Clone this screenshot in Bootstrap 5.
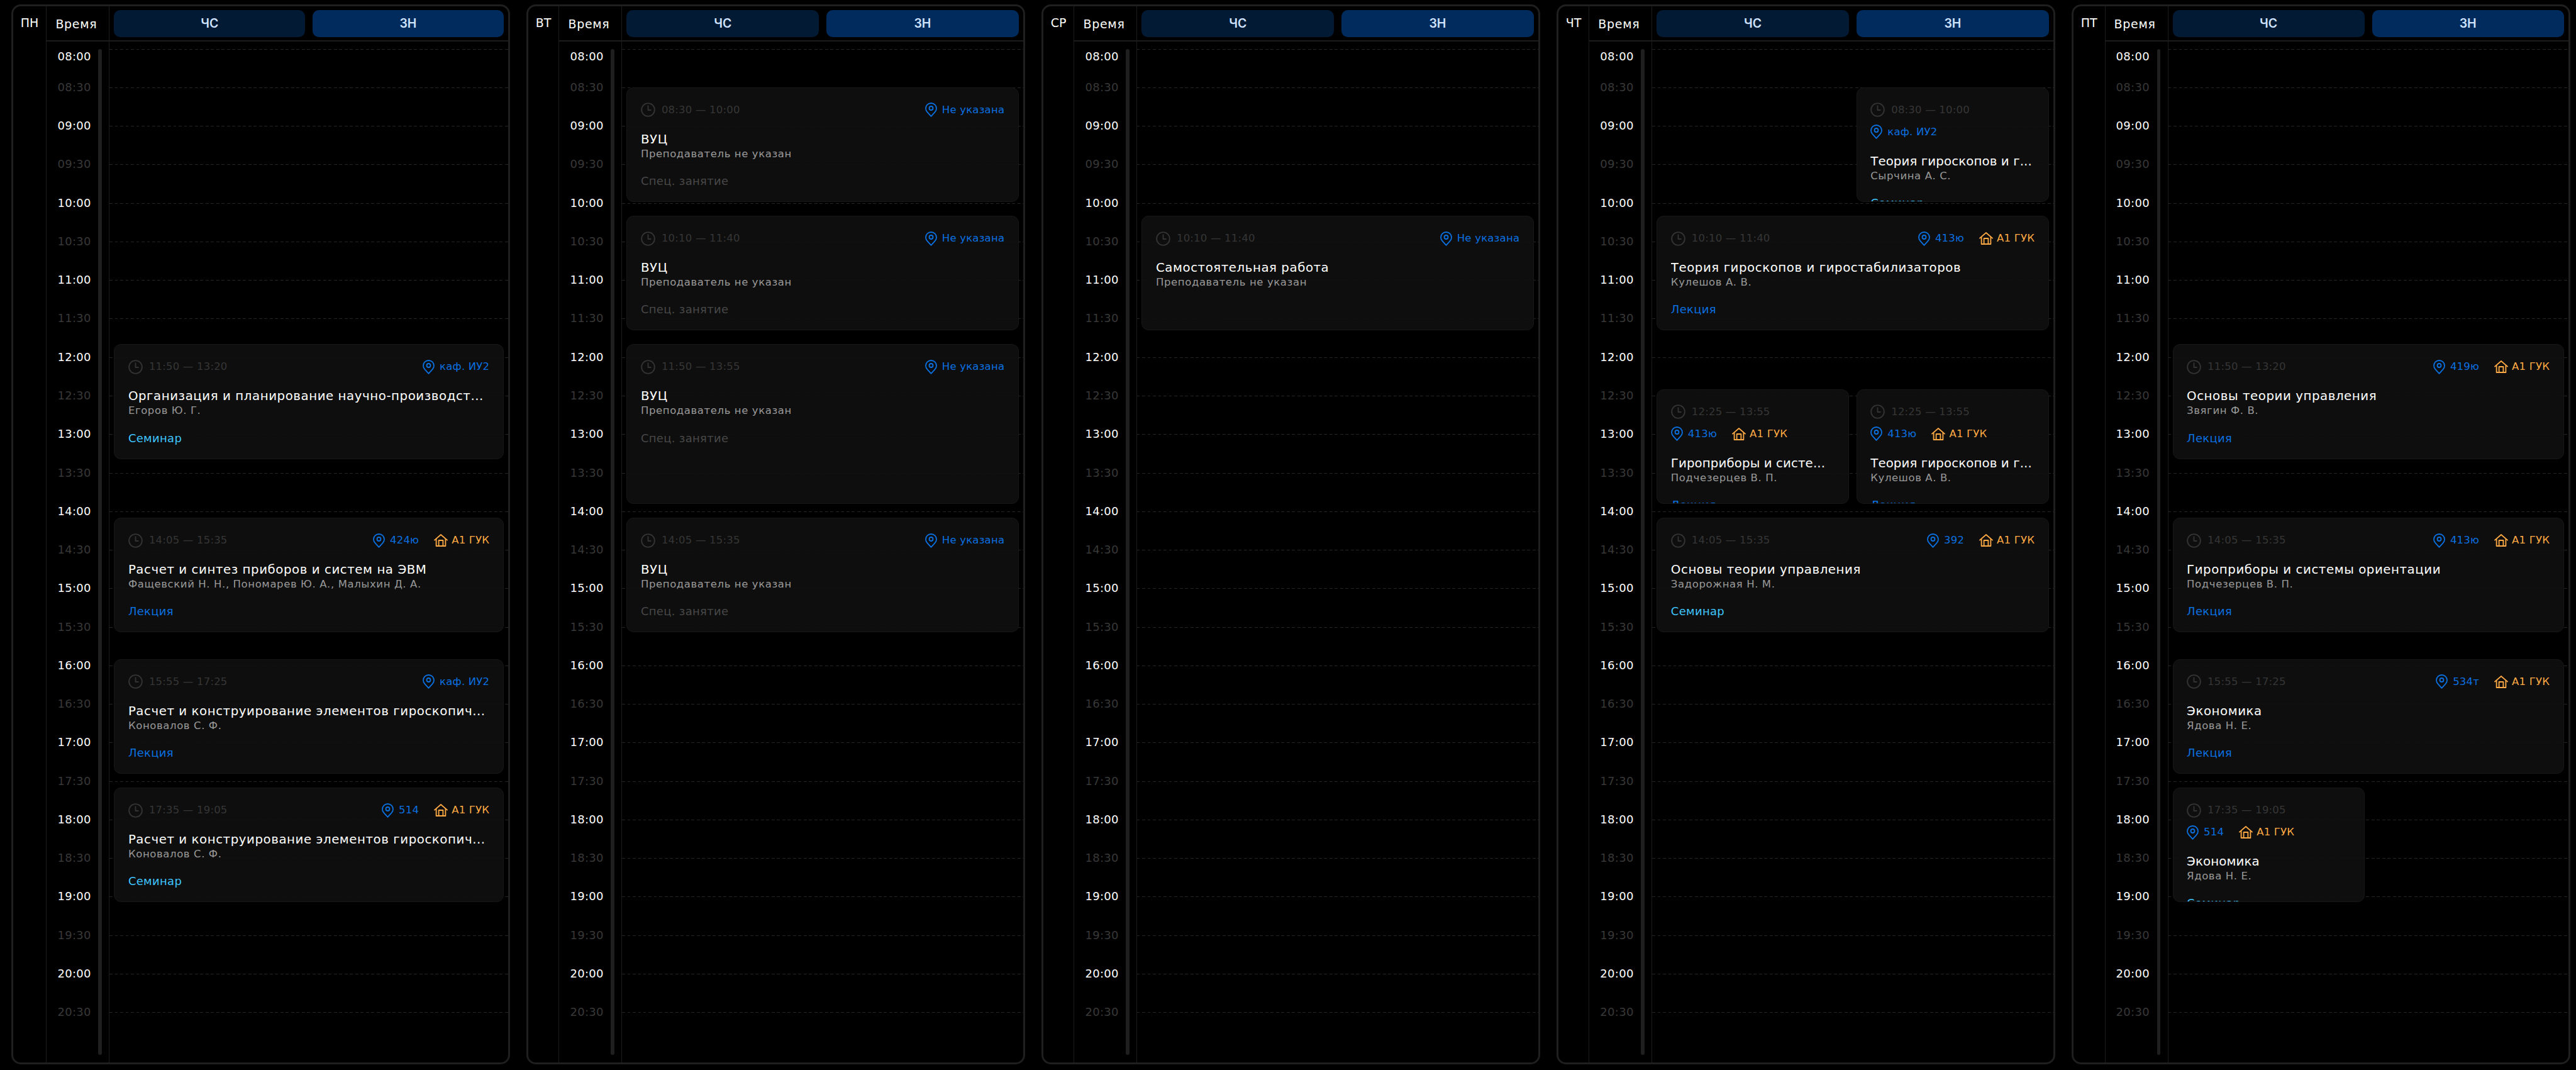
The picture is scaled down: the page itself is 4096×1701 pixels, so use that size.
<!doctype html>
<html lang="ru">
<head>
<meta charset="utf-8">
<title>Расписание</title>
<link href="https://cdn.jsdelivr.net/npm/bootstrap@5.3.0/dist/css/bootstrap.min.css" rel="stylesheet">
<style>
html,body{height:100%;background:#000}
body{font-family:"DejaVu Sans","Noto Sans",sans-serif;color:#fff;padding:7px 9.4px 9px 17.8px;overflow:hidden}
.week{height:100%;gap:26px}
.daycol{flex:1 1 0;min-width:0;border:3px solid #1f1f1f;border-radius:15px;overflow:hidden}
.dayname{padding:15px 12px 0;border-right:1px solid #1c1c1c;font-size:19px;line-height:22px;flex:none}
.headrow{height:56px;border-bottom:2px solid #1c1c1c;flex:none}
.timehead{width:100px;flex:none;border-right:1px solid #1c1c1c;font-size:19px;padding:17px 0 0 14px;line-height:22px;letter-spacing:.7px;white-space:nowrap}
.modes{gap:12px;padding:6px 7px 0;align-items:flex-start}
.modebtn{flex:1 1 0;height:43px;border-radius:10px;border:0;font-family:Inter,sans-serif;font-size:19.5px;font-weight:600;color:#cfe2ff;display:flex;align-items:center;justify-content:center}
.mode-ch{background:#021a33}
.mode-zn{background:#002b5c}
.bodyrow{min-height:0}
.timecol{width:100px;flex:none;border-right:1px solid #1c1c1c;padding:11.6px 0 12px 0}
.ticks{width:82px;padding-left:5.4px;text-align:center;flex:none}
.tick{height:61.28px;line-height:0;font-size:18px;letter-spacing:.3px;color:#383838}
.tick-hour{color:#fff}
.tick-first{padding-top:12px}
.tbar{width:5.7px;background:#1f1f1f;border-radius:3px;flex:none}
.grid-area{min-width:0;padding-top:11.6px;position:relative}
.gline{height:61.28px;background-image:repeating-linear-gradient(90deg,#242424 0 4.5px,transparent 4.5px 8.5px);background-size:100% 1px;background-repeat:no-repeat}
.lesson{position:absolute;background:rgba(16,16,16,.9);border:1px solid #171717;border-radius:11px;overflow:hidden;padding:23px 21.5px 0}
.l-wide{left:7px;right:7px}
.l-half1{left:7px;width:calc(50% - 12.7px)}
.l-half2{right:7px;width:calc(50% - 12.7px)}
.tm{font-size:16.5px;line-height:24px;color:#363636;gap:10px;white-space:nowrap;letter-spacing:.2px}
.tm svg{flex:none}
.rooms{gap:24px;font-size:16.5px;line-height:24px;white-space:nowrap;letter-spacing:.2px}
.rooms-below{margin-top:11px}
.rm{color:#0b70e0;gap:8px}
.bld{color:#ffaa44;gap:6px}
.ttl{font-size:19.8px;line-height:24px;margin-top:22.7px;white-space:nowrap;overflow:hidden;text-overflow:ellipsis;letter-spacing:.55px}
.l-half1 .ttl,.l-half2 .ttl{letter-spacing:.1px}
.tch{font-size:16.5px;line-height:22px;color:#999;white-space:nowrap;letter-spacing:.6px}
.ltype{font-size:18px;line-height:22px;margin-top:21.5px;white-space:nowrap;letter-spacing:.3px}
.t-sem{color:#3fc6ff}
.t-lec{color:#0b70e0}
.t-spec{color:#484848}
</style>
</head>
<body>
<div class="week d-flex" id="week"></div>
<script>
var CLOCK='<svg width="23" height="23" viewBox="0 0 24 24" fill="none" stroke="#333" stroke-width="2"><circle cx="12" cy="12" r="10.8"/><path d="M12 5.5V12.5H16.5" stroke-linecap="round" stroke-linejoin="round"/></svg>';
var PIN='<svg width="19" height="23" viewBox="0 0 19 23" fill="none" stroke="#0b70e0" stroke-width="1.8" stroke-linejoin="round"><path d="M9.5 21.8 3.6 15.4C1.9 13.6 1 11.4 1 9.4 1 4.7 4.8 1 9.5 1S18 4.7 18 9.4C18 11.4 17.1 13.6 15.4 15.4Z"/><circle cx="9.5" cy="9" r="3"/></svg>';
var HOUSE='<svg width="22" height="20" viewBox="0 0 22 20" fill="none" stroke="#ffaa44" stroke-width="1.8" stroke-linecap="round" stroke-linejoin="round"><path d="M1 9.6 11 1 21 9.6"/><path d="M3.6 7.8V19H18.4V7.8"/><path d="M7.6 19V10H14.4V19"/></svg>';
var SEM=['Семинар','t-sem'],LEC=['Лекция','t-lec'],SPEC=['Спец. занятие','t-spec'];
var NT='Преподаватель не указан';
var days=[
 ['ПН',[
  ['11:50','13:20','w','каф. ИУ2',0,'Организация и планирование научно-производст...','Егоров Ю. Г.',SEM],
  ['14:05','15:35','w','424ю',1,'Расчет и синтез приборов и систем на ЭВМ','Фащевский Н. Н., Пономарев Ю. А., Малыхин Д. А.',LEC],
  ['15:55','17:25','w','каф. ИУ2',0,'Расчет и конструирование элементов гироскопич...','Коновалов С. Ф.',LEC],
  ['17:35','19:05','w','514',1,'Расчет и конструирование элементов гироскопич...','Коновалов С. Ф.',SEM]]],
 ['ВТ',[
  ['08:30','10:00','w','Не указана',0,'ВУЦ',NT,SPEC],
  ['10:10','11:40','w','Не указана',0,'ВУЦ',NT,SPEC],
  ['11:50','13:55','w','Не указана',0,'ВУЦ',NT,SPEC],
  ['14:05','15:35','w','Не указана',0,'ВУЦ',NT,SPEC]]],
 ['СР',[
  ['10:10','11:40','w','Не указана',0,'Самостоятельная работа',NT,null]]],
 ['ЧТ',[
  ['08:30','10:00','2','каф. ИУ2',0,'Теория гироскопов и г...','Сырчина А. С.',SEM],
  ['10:10','11:40','w','413ю',1,'Теория гироскопов и гиростабилизаторов','Кулешов А. В.',LEC],
  ['12:25','13:55','1','413ю',1,'Гироприборы и систе...','Подчезерцев В. П.',LEC],
  ['12:25','13:55','2','413ю',1,'Теория гироскопов и г...','Кулешов А. В.',LEC],
  ['14:05','15:35','w','392',1,'Основы теории управления','Задорожная Н. М.',SEM]]],
 ['ПТ',[
  ['11:50','13:20','w','419ю',1,'Основы теории управления','Звягин Ф. В.',LEC],
  ['14:05','15:35','w','413ю',1,'Гироприборы и системы ориентации','Подчезерцев В. П.',LEC],
  ['15:55','17:25','w','534т',1,'Экономика','Ядова Н. Е.',LEC],
  ['17:35','19:05','1','514',1,'Экономика','Ядова Н. Е.',SEM]]]
];
var HOUR=122.56;
function mins(s){var p=s.split(':');return (+p[0]-8)*60+ +p[1];}
function lesson(l){
 var top=mins(l[0])/60*HOUR, h=(mins(l[1])-mins(l[0]))/60*HOUR-1.5;
 var cls=l[2]=='w'?'l-wide':(l[2]=='1'?'l-half1':'l-half2');
 var tm='<div class="tm d-flex align-items-center">'+CLOCK+'<span>'+l[0]+' — '+l[1]+'</span></div>';
 var rooms='<div class="rooms d-flex align-items-center"><span class="rm d-flex align-items-center">'+PIN+'<span>'+l[3]+'</span></span>'+
   (l[4]?'<span class="bld d-flex align-items-center">'+HOUSE+'<span>А1 ГУК</span></span>':'')+'</div>';
 var head=l[2]=='w'
  ? '<div class="d-flex justify-content-between align-items-center">'+tm+rooms+'</div>'
  : tm+rooms.replace('class="rooms ','class="rooms rooms-below ');
 return '<div class="lesson '+cls+'" style="top:'+(top+11.6).toFixed(2)+'px;height:'+h.toFixed(2)+'px">'+head+
  '<div class="ttl">'+l[5]+'</div><div class="tch">'+l[6]+'</div>'+
  (l[7]?'<div class="ltype '+l[7][1]+'">'+l[7][0]+'</div>':'')+'</div>';
}
var ticks='',lines='';
for(var i=0;i<26;i++){
 var hh=8+Math.floor(i/2),lab=(hh<10?'0':'')+hh+(i%2?':30':':00');
 ticks+='<div class="tick'+(i%2?'':' tick-hour')+(i==0?' tick-first':'')+'">'+lab+'</div>';
 lines+='<div class="gline"></div>';
}
document.getElementById('week').innerHTML=days.map(function(d){
 return '<section class="daycol d-flex"><div class="dayname">'+d[0]+'</div>'+
 '<div class="flex-grow-1 d-flex flex-column" style="min-width:0">'+
  '<div class="headrow d-flex"><div class="timehead">Время</div><div class="modes d-flex flex-grow-1"><div class="modebtn mode-ch">ЧС</div><div class="modebtn mode-zn">ЗН</div></div></div>'+
  '<div class="bodyrow d-flex flex-grow-1"><div class="timecol d-flex"><div class="ticks">'+ticks+'</div><div class="tbar"></div></div>'+
  '<div class="grid-area flex-grow-1">'+lines+d[1].map(lesson).join('')+'</div></div>'+
 '</div></section>';
}).join('');
</script>
<script src="https://cdn.jsdelivr.net/npm/bootstrap@5.3.0/dist/js/bootstrap.bundle.min.js"></script>
</body>
</html>
